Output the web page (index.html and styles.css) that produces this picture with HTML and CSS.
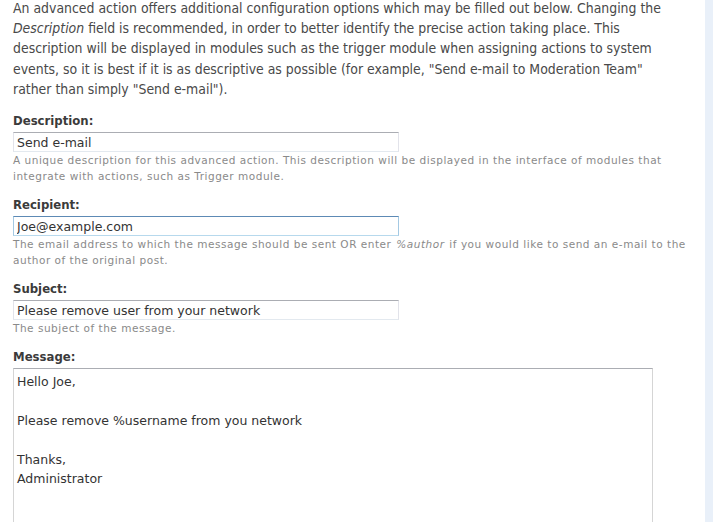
FILE: index.html
```html
<!DOCTYPE html>
<html lang="en">
<head>
<meta charset="utf-8">
<title>Advanced action</title>
<link rel="stylesheet" href="styles.css">
</head>
<body>
<div class="page">
  <main class="content">
    <p class="intro">An advanced action offers additional configuration options which may be filled out below. Changing the<br><em>Description</em> field is recommended, in order to better identify the precise action taking place. This<br>description will be displayed in modules such as the trigger module when assigning actions to system<br>events, so it is best if it is as descriptive as possible (for example, "Send e-mail to Moderation Team"<br>rather than simply "Send e-mail").</p>

    <div class="field">
      <label class="label" for="desc">Description:</label>
      <input class="text" id="desc" type="text" value="Send e-mail">
      <div class="help">A unique description for this advanced action. This description will be displayed in the interface of modules that integrate with actions, such as Trigger module.</div>
    </div>

    <div class="field">
      <label class="label" for="rcpt">Recipient:</label>
      <input class="text focused" id="rcpt" type="text" value="Joe@example.com">
      <div class="help">The email address to which the message should be sent OR enter <em>%author</em> if you would like to send an e-mail to the author of the original post.</div>
    </div>

    <div class="field">
      <label class="label" for="subj">Subject:</label>
      <input class="text" id="subj" type="text" value="Please remove user from your network">
      <div class="help">The subject of the message.</div>
    </div>

    <div class="field">
      <label class="label" for="msg">Message:</label>
      <textarea class="area" id="msg">Hello Joe,

Please remove %username from you network

Thanks,
Administrator</textarea>
    </div>
  </main>
  <aside class="strip"></aside>
</div>
</body>
</html>
```

FILE: styles.css
```css
html, body {
  margin: 0;
  padding: 0;
  background: #ffffff;
  overflow: hidden;
}

.page {
  display: flex;
  width: 713px;
  height: 522px;
  overflow: hidden;
}

.content {
  flex: 1;
  padding: 0 0 0 13px;
  min-width: 0;
}

.strip {
  width: 8px;
  flex: none;
  background: #e9f0f9;
}

.intro {
  margin: -2px 0 14px 0;
  font-family: "DejaVu Sans Condensed", "Liberation Sans", sans-serif;
  font-size: 13.9px;
  line-height: 20.2px;
  color: #494949;
  white-space: nowrap;
}

.intro em {
  font-style: italic;
}

.field {
  display: flex;
  flex-direction: column;
  align-items: flex-start;
  margin-bottom: 13px;
}

.label {
  font-family: "DejaVu Sans Condensed", "Liberation Sans", sans-serif;
  font-weight: bold;
  font-size: 13px;
  line-height: 16px;
  color: #3b3b3b;
  margin-bottom: 3px;
}

.text {
  box-sizing: border-box;
  width: 386px;
  height: 20px;
  margin: 0;
  padding: 0 3px;
  font-family: "DejaVu Sans", sans-serif;
  font-size: 12.5px;
  color: #333333;
  background: #ffffff;
  border: 1px solid #e2e3ea;
  border-top-color: #abadb3;
  border-bottom-color: #e3e9ef;
  outline: none;
}

.text.focused {
  border-color: #a4c9e3;
  border-top-color: #5d8ab5;
  border-bottom-color: #b7d9ed;
}

.help {
  font-family: "DejaVu Sans", sans-serif;
  font-size: 10.5px;
  letter-spacing: 0.52px;
  line-height: 16px;
  color: #8a8a8a;
  width: 690px;
}

.help em {
  font-style: italic;
  margin: 0 1px;
}

.area {
  box-sizing: border-box;
  width: 640px;
  height: 200px;
  margin: 0;
  padding: 3px 3px;
  font-family: "DejaVu Sans", sans-serif;
  font-size: 12.5px;
  line-height: 19.4px;
  color: #333333;
  background: #ffffff;
  border: 1px solid #d5d5d5;
  border-top-color: #abadb3;
  resize: none;
  outline: none;
}
```
